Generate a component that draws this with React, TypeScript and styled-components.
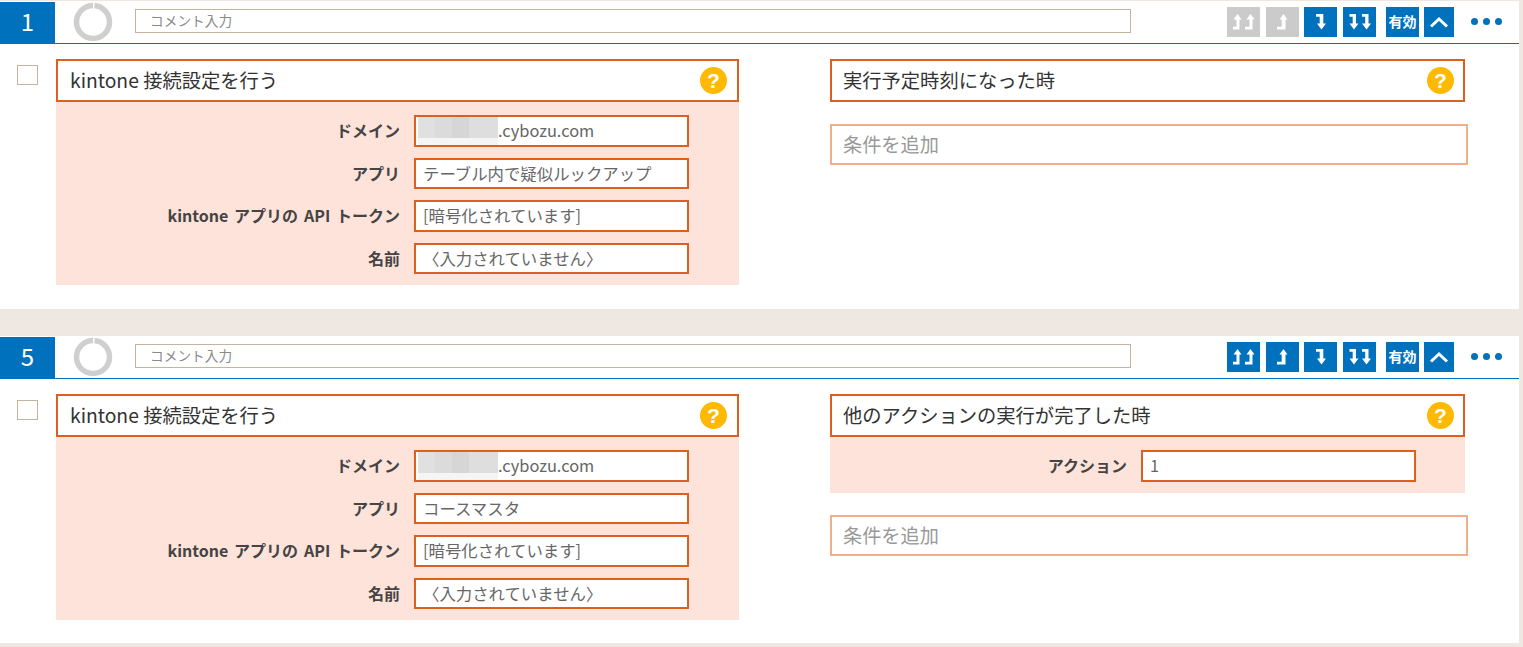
import React from "react";
import styled, { createGlobalStyle } from "styled-components";

const GlobalStyles = createGlobalStyle`
  *,
  *::after,
  *::before {
    box-sizing: border-box;
  }

  body {
    margin: 0;
    padding: 1px 0 0;
    background: #efe7e1;
    color: #333;
    font-family: "Noto Sans CJK JP", "Noto Sans", sans-serif;
    overflow: hidden;
  }
`;

const Card = styled.section<{ $bottom: number }>`
  width: 1519px;
  background: #fff;
  padding-bottom: ${(p) => p.$bottom}px;
  margin-bottom: 27px;
`;

const Header = styled.header`
  display: flex;
  align-items: center;
  height: 43px;
  border-bottom: 1px solid #0071bc;
`;

const RuleNumber = styled.div`
  width: 55px;
  height: 42px;
  margin-bottom: -1px;
  background: #0071bc;
  color: #fff;
  font-size: 24px;
  line-height: 37px;
  text-align: center;
`;

const Ring = styled.svg`
  width: 40px;
  height: 40px;
  margin: -1px 0 0 18px;
`;

const CommentField = styled.div`
  width: 996px;
  height: 24px;
  margin: 0 0 2px 22px;
  padding-left: 14px;
  border: 1px solid #c4b39f;
  color: #8a8a8a;
  font-size: 13.7px;
  line-height: 20px;
`;

const Tools = styled.div`
  display: flex;
  align-items: center;
  margin-left: 96px;
`;

const ToolButton = styled.button<{ $off?: boolean; $gap?: number; $w?: number }>`
  display: flex;
  align-items: center;
  justify-content: center;
  width: ${(p) => p.$w ?? 33}px;
  height: 30px;
  margin: 0 0 0 ${(p) => p.$gap ?? 0}px;
  padding: 0 0 2px;
  border: 0;
  background: ${(p) => (p.$off ? "#cbcbcb" : "#0071bc")};
  color: #fff;
  font-family: inherit;
  font-size: 14px;
  font-weight: 700;
  white-space: nowrap;

  svg {
    margin-bottom: -2px;
  }
`;

const Dots = styled.div`
  display: flex;
  gap: 5px;
  margin: 0 0 1px 17px;
`;

const Dot = styled.span`
  width: 7px;
  height: 7px;
  border-radius: 50%;
  background: #0071bc;
`;

const Body = styled.div`
  display: flex;
  align-items: flex-start;
  padding: 15px 0 0 17px;
`;

const CheckBox = styled.div`
  flex: none;
  width: 21px;
  height: 20px;
  margin: 6px 18px 0 0;
  border: 1px solid #c4b39f;
`;

const Column = styled.div<{ $w: number; $gap?: number }>`
  flex: none;
  width: ${(p) => p.$w}px;
  margin-left: ${(p) => p.$gap ?? 0}px;
`;

const TitleBox = styled.div<{ $right: number; $left: number }>`
  display: flex;
  align-items: center;
  justify-content: space-between;
  height: 43px;
  padding: 0 ${(p) => p.$right}px 0 ${(p) => p.$left}px;
  border: 2px solid #dc6120;
  color: #333;
  font-size: 19.3px;
`;

const TitleText = styled.span`
  margin-bottom: 2px;
`;

const Help = styled.span`
  display: block;
  flex: none;
  width: 27px;
  height: 27px;
  border-radius: 50%;
  background: #ffb900;
  color: #fff;
  font-family: "Liberation Sans", sans-serif;
  font-size: 21px;
  font-weight: 700;
  line-height: 27px;
  text-align: center;
`;

const Panel = styled.div`
  display: flex;
  flex-direction: column;
  gap: 11px;
  padding: 13px 0 11px;
  background: #fee3da;
`;

const Row = styled.div<{ $label: number }>`
  display: grid;
  grid-template-columns: ${(p) => p.$label}px 275px;
  column-gap: 14px;
  align-items: center;

  &:nth-child(even) > div {
    height: 31px;
  }
`;

const Label = styled.label`
  margin-bottom: 2px;
  color: #444;
  font-size: 16px;
  font-weight: 700;
  word-spacing: 2.2px;
  text-align: right;
  white-space: nowrap;
`;

const Field = styled.div`
  display: flex;
  align-items: center;
  height: 32px;
  padding: 0 0 2px 7px;
  border: 2px solid #dc6120;
  background: #fff;
  color: #666;
  font-size: 16.4px;
  white-space: nowrap;
  overflow: hidden;
`;

const Masked = styled.span`
  display: inline-block;
  flex: none;
  width: 80px;
  height: 28px;
  margin: 2px 0 0 -5px;
  background:
    linear-gradient(#0000 0 21px, #f5f5f5 21px),
    linear-gradient(90deg, #e0e0e0 0 17px, #dbdbdb 17px 34px, #d6d6d6 34px 51px, #dedede 51px);
`;

const AddCondition = styled.div`
  display: flex;
  align-items: center;
  width: 638px;
  height: 41px;
  margin-top: 22px;
  padding: 0 0 2px 11px;
  border: 2px solid #efae8c;
  color: #999;
  font-size: 19.2px;
`;

const doubleUp = (
  <svg width="33" height="30" viewBox="0 0 33 30" fill="currentColor">
    <path d="M10.5 7 L14.5 12.5 H12.5 V22.5 H6 V19.7 H9.5 V12.5 H6.5 Z" />
    <path d="M23.5 7 L27.5 12.5 H25.5 V22.5 H18 V19.7 H22.5 V12.5 H19.5 Z" />
  </svg>
);

const singleUp = (
  <svg width="33" height="30" viewBox="0 0 33 30" fill="currentColor">
    <path d="M17.5 7 L21.5 12.5 H19.5 V22.5 H11 V19.7 H15.7 V12.5 H13.5 Z" />
  </svg>
);

const singleDown = (
  <svg width="33" height="30" viewBox="0 0 33 30" fill="currentColor">
    <path d="M12 7 H19.3 V16.5 H22 L17.5 22.5 L13 16.5 H15.7 V9.8 H12 Z" />
  </svg>
);

const doubleDown = (
  <svg width="33" height="30" viewBox="0 0 33 30" fill="currentColor">
    <path d="M6.5 7 H13 V16.5 H15.5 L11 22.5 L6.5 16.5 H9.7 V9.8 H6.5 Z" />
    <path d="M19 7 H25.5 V16.5 H28 L23.5 22.5 L19 16.5 H22.2 V9.8 H19 Z" />
  </svg>
);

const chevronUp = (
  <svg width="30" height="30" viewBox="0 0 30 30" fill="none" stroke="currentColor" strokeWidth="3">
    <path d="M7 19.5 L15 12 L23 19.5" />
  </svg>
);

const Toolbar = ({ upOff }: { upOff?: boolean }) => (
  <Tools>
    <ToolButton $off={upOff}>{doubleUp}</ToolButton>
    <ToolButton $off={upOff} $gap={6}>{singleUp}</ToolButton>
    <ToolButton $gap={5}>{singleDown}</ToolButton>
    <ToolButton $gap={6}>{doubleDown}</ToolButton>
    <ToolButton $gap={10}>有効</ToolButton>
    <ToolButton $gap={5} $w={30}>{chevronUp}</ToolButton>
    <Dots>
      <Dot />
      <Dot />
      <Dot />
    </Dots>
  </Tools>
);

const Rule = ({
  no,
  app,
  trigger,
  bottom,
  upOff,
  action,
}: {
  no: number;
  app: string;
  trigger: string;
  bottom: number;
  upOff?: boolean;
  action?: string;
}) => (
  <Card $bottom={bottom}>
    <Header>
      <RuleNumber>{no}</RuleNumber>
      <Ring viewBox="0 0 40 40">
        <circle
          cx="20"
          cy="20"
          r="16.5"
          fill="none"
          stroke="#cfcfcf"
          strokeWidth="5.5"
          strokeDasharray="101.5 2.2"
          strokeDashoffset="-1.5"
          transform="rotate(-90 20 20)"
        />
      </Ring>
      <CommentField>コメント入力</CommentField>
      <Toolbar upOff={upOff} />
    </Header>
    <Body>
      <CheckBox />
      <Column $w={683}>
        <TitleBox $left={12} $right={10}>
          <TitleText>kintone 接続設定を行う</TitleText>
          <Help>?</Help>
        </TitleBox>
        <Panel>
          <Row $label={344}>
            <Label>ドメイン</Label>
            <Field>
              <Masked />
              .cybozu.com
            </Field>
          </Row>
          <Row $label={344}>
            <Label>アプリ</Label>
            <Field>{app}</Field>
          </Row>
          <Row $label={344}>
            <Label>kintone アプリの API トークン</Label>
            <Field>[暗号化されています]</Field>
          </Row>
          <Row $label={344}>
            <Label>名前</Label>
            <Field>〈入力されていません〉</Field>
          </Row>
        </Panel>
      </Column>
      <Column $w={635} $gap={91}>
        <TitleBox $left={11} $right={9}>
          <TitleText>{trigger}</TitleText>
          <Help>?</Help>
        </TitleBox>
        {action && (
          <Panel>
            <Row $label={297}>
              <Label>アクション</Label>
              <Field>{action}</Field>
            </Row>
          </Panel>
        )}
        <AddCondition>条件を追加</AddCondition>
      </Column>
    </Body>
  </Card>
);

const App = () => {
  return (
    <>
      <GlobalStyles />
      <Rule no={1} app="テーブル内で疑似ルックアップ" trigger="実行予定時刻になった時" bottom={24} upOff />
      <Rule no={5} app="コースマスタ" trigger="他のアクションの実行が完了した時" bottom={23} action="1" />
    </>
  );
};

export default App;
